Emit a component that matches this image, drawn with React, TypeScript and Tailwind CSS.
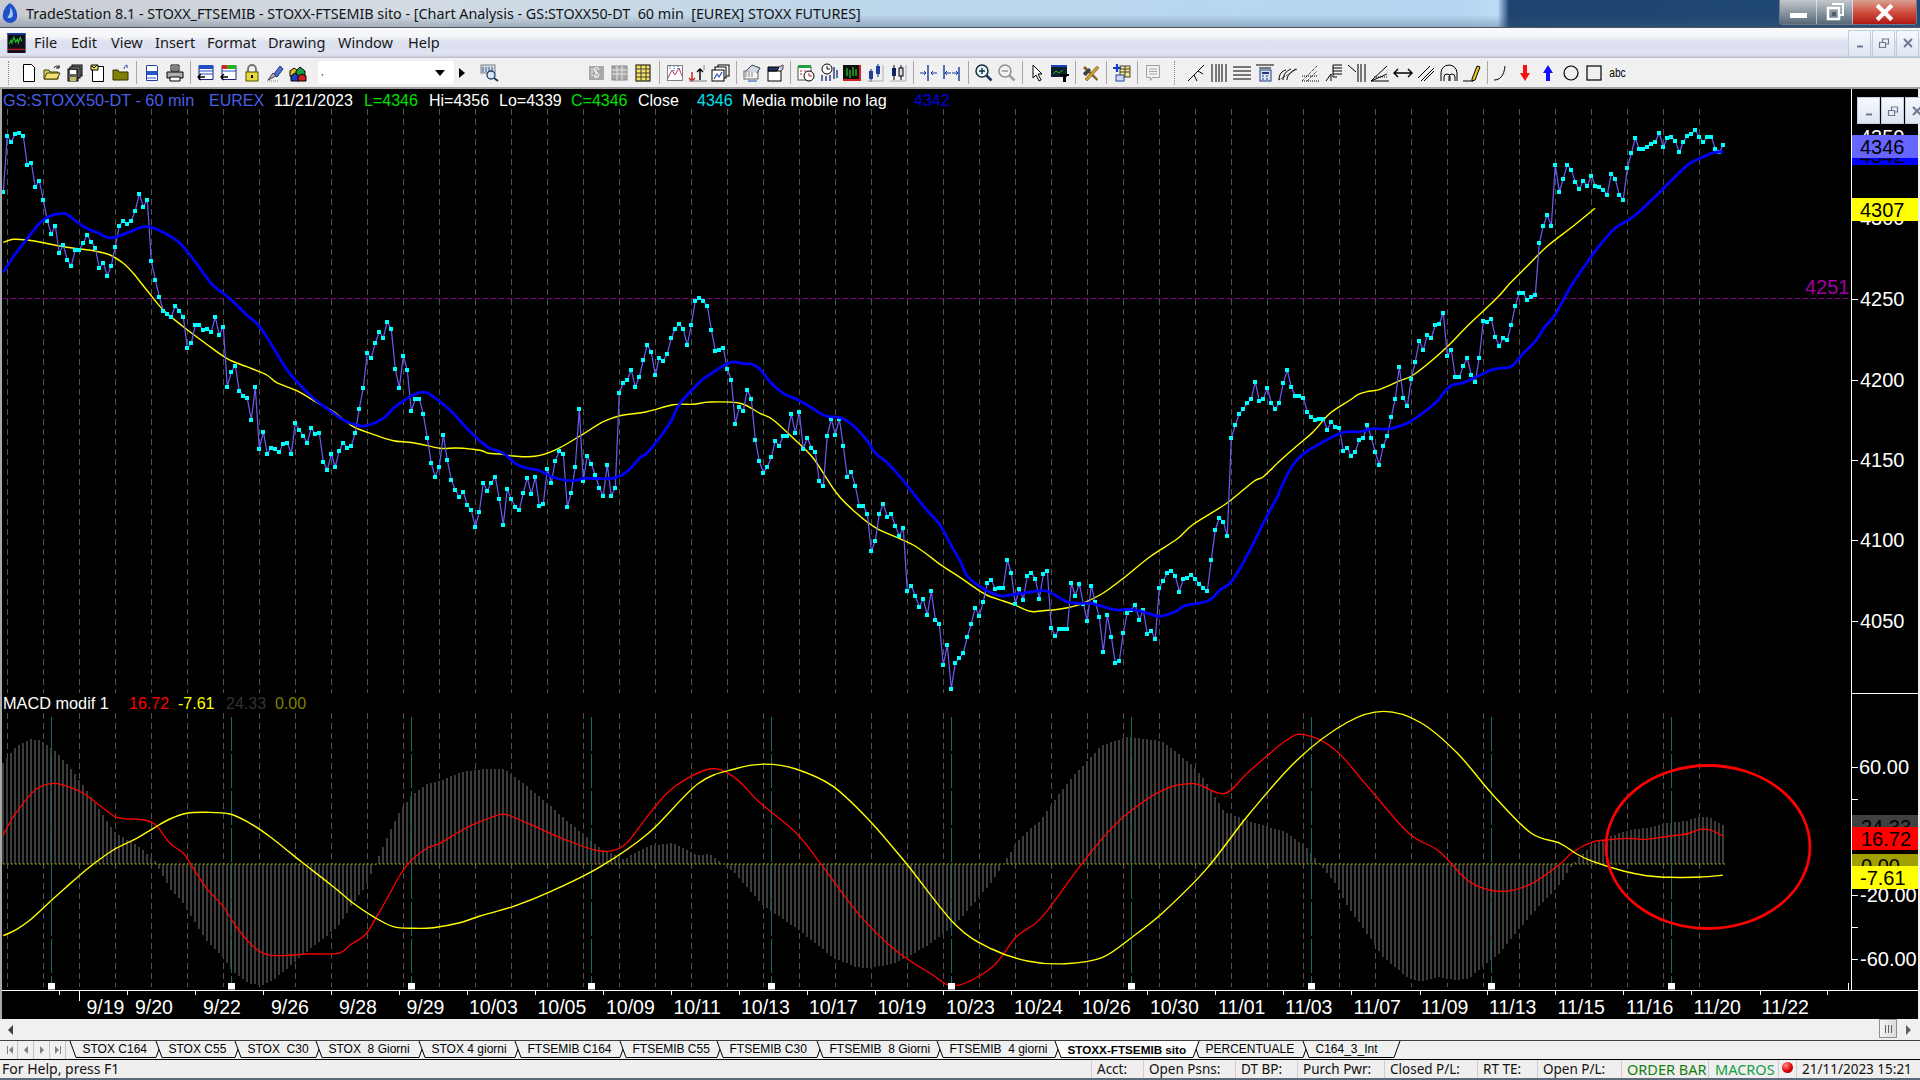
import React from "react";

const X = (i: number) => 3.3 + 4 * i;
type P = [number, number];
const z = (a: number[], xo: number, yo: number, sx = 3, sy = 3): P[] => {
  const r: P[] = [];
  for (let i = 0; i < a.length; i += 2) r.push([xo + a[i] / sx, yo + a[i + 1] / sy]);
  return r;
};
const D = 1.2245;
const disp = (a: number[]): P[] => z(a, 0, 0, 1 / D, 1 / D);
const poly = (p: P[]) => p.map((q) => q[0].toFixed(1) + "," + q[1].toFixed(1)).join(" ");
const smooth = (p: P[]) => {
  let d = `M${p[0][0].toFixed(1)} ${p[0][1].toFixed(1)}`;
  for (let i = 0; i < p.length - 1; i++) {
    const a = p[Math.max(0, i - 1)], b = p[i], c = p[i + 1], e = p[Math.min(p.length - 1, i + 2)];
    const c1x = b[0] + (c[0] - a[0]) / 6, c1y = b[1] + (c[1] - a[1]) / 6;
    const c2x = c[0] - (e[0] - b[0]) / 6, c2y = c[1] - (e[1] - b[1]) / 6;
    d += `C${c1x.toFixed(1)} ${c1y.toFixed(1)} ${c2x.toFixed(1)} ${c2y.toFixed(1)} ${c[0].toFixed(1)} ${c[1].toFixed(1)}`;
  }
  return d;
};
const interp = (p: P[], x: number) => {
  if (x <= p[0][0]) return p[0][1];
  for (let i = 1; i < p.length; i++) {
    if (x <= p[i][0]) {
      const t = (x - p[i - 1][0]) / (p[i][0] - p[i - 1][0]);
      return p[i - 1][1] + t * (p[i][1] - p[i - 1][1]);
    }
  }
  return p[p.length - 1][1];
};

const s1 = [276,107,126,101,98,108,195,188,261,242,299,362,402,377,459,435,480,497,450,450,429,404,426,443,505,488,528,497,440,377,362,372,362,332,281,321,299,483,539,590,632,642,651,618,632,651,744,729,675,675,690,686,696,651,705,680,860,816,797,873,887,895,960,862,1047,995,1061,1043,1047,1055,1031,1028,1061,970,990,1008,1028,984,1002,998,1085,1110,1062,1100,1052,1028,1043,1038,998,926,863,759,774,729,695,714,665,687,806,864,767,810,933,897,897,942,1014,1090,1130,1100,1004,1080,1140].map((v) => 100 + v / 3);
const s1b = [490,497,492,505,510,527,512];
const s2 = [608,632,608,591,656,734,627,657,680,690,639,593,642,591,677,672,567,608,543,513,521,681,638,560,387,602,527,551,585,623,647,554,647,623,339,309,299,270,321,290,241,195,217,285,233,242,221,173,147,131,147,195,135,62,53,63,78,149,212,210,203,267,299,431,381,393,329,356,479,543,578,561,531,483,497,467,467,401,459,395,507,473,503,516,603,618,467,416,464,416,497,591,575,618,677,677,702,813,783,702,671,711,702,738,768,744,933,917,947,981,957,1005,933,1019,1031,1154,1095,1226,1149,1134].map((v) => 280 + v / 3);
const s3 = [939,891,851,803,827,785,729,721,747,743,743,659,699,791,747,779,707,698,717,776,703,692,863,887,867,867,867,729,767,731,791,843,737,787,831,935,825,890,969,963,879,819,809,795,840,809,881,873,897,743,722,699,692,707,755,717,713,705,717,731,743,753,659,570,533,545,588,294,255,222,207,189,177,125,183,177,144,188,207,188,129,90,141,168,168,173,215,231,239,237,237,269,245,261,263,333,323,348,336,299,294,255,294,336,375,317,288,231,177,81,173,198,117,65,2,30].map((v) => 340 + v / 3);
const s4 = [555,564,525,521,488,617,600,681,681,648,625,675,695,623,512,516,507,560,588,564,569,524,467,429,429,451,440,435,279,228,194,228,44,125,87,44,60,96,117,92,107,77,107,110,120,134,71,87,134,150,54].map((v) => 150 + v / 3);
const s5 = [460,415,447,447,441,433,425,400,441,415,410,423,457,425,408,401,391,410,426,410,410,446,457,434].map((v) => v / 3);
const price = [...s1, ...s1b, ...s2, ...s3, ...s4, ...s5].map((y, i) => [X(i), y] as P);

const blue: P[] = [
  ...z([10,517,40,470,80,418,120,368,150,348,180,341,200,343,230,365,260,385,290,397,325,413,350,410,390,395,420,383,445,380,480,392,510,408,540,430,570,465,600,505,635,552,670,580,700,605,740,645,770,670,800,710,830,760,865,815,900,855,940,895,980,925,1030,960,1070,975,1100,977,1150,955,1180,925,1210,903,1250,880,1280,878,1320,905,1360,940,1400,985], 0, 100),
  ...z([0,483,30,505,70,520,110,553,140,564,180,572,215,590,260,601,290,601,310,595,370,596,410,592,445,572,480,533,500,520,545,465,575,420,600,370,660,305,680,290,730,257,760,246,790,251,815,252,840,268,870,305,910,340,950,358,990,380,1035,407,1080,413,1115,433,1160,480,1185,518,1220,547,1260,590,1300,640,1340,690,1380,735,1410,790], 480, 280),
  ...z([0,662,20,705,60,740,120,767,170,762,210,756,260,753,320,785,360,790,395,790,440,803,470,810,510,808,555,817,600,829,650,813,675,797,745,782,780,750,810,730,840,685,875,620,920,530,955,465,995,380], 960, 340).filter((p) => p[0] < 1280),
  ...z([0,1020,35,950,70,912,130,875,190,847,240,845,280,836,330,836,390,815,465,760,490,730,515,706,550,698,590,680,640,658,680,653,700,645,730,610,765,575,795,530,825,495,875,405,930,325,960,285,1005,235,1060,200,1120,145,1190,75,1230,40,1260,25,1300,8,1330,5], 1280, 150),
];
const yel: P[] = [
  ...z([10,427,40,418,80,420,130,428,200,442,280,452,330,465,370,490,400,520,440,570,490,630,550,680,610,725,680,775,740,800,800,825,830,848,890,872,950,907,1000,935,1060,980,1120,1003,1180,1022,1240,1028,1320,1045,1370,1044], 0, 100),
  ...z([0,511,25,520,60,522,100,528,165,529,230,508,300,468,370,425,420,407,500,395,580,374,640,373,690,366,780,370,840,400,880,420,940,475,1000,535,1070,640,1130,700,1190,745,1300,795,1380,853], 480, 280),
  ...z([0,712,40,740,80,765,130,783,165,795,210,814,240,813,300,807,360,793,425,762,490,715,570,650,650,598,700,553,800,490,880,425,910,410], 960, 340),
  ...z([0,932,50,888,100,845,150,790,210,750,235,733,260,725,300,718,360,692,400,675,460,628,510,582,560,530,650,445,690,400,745,345,800,290,880,228,945,175], 1280, 150),
];
const red: P[] = [
  ...z([10,465,40,410,70,370,95,340,125,318,165,310,210,322,250,340,285,365,310,385,345,410,380,417,420,418,465,433,510,490,550,520,580,565,620,625,670,680,705,735,750,790,790,820,830,827,880,825,920,822,1015,820,1050,795,1095,765,1130,710,1170,640,1200,585,1235,540,1280,505,1320,490,1370,460,1400,443,1440,425], 0, 680),
  ...disp([400,668,412,665,430,672,460,685,490,695,510,690,530,665,550,643,580,628,600,635,620,655,650,680,670,705,700,745,730,775,760,795,780,805,810,790,830,765,850,750,880,710,900,685,920,665,950,645,975,640,1000,648,1020,630,1050,605,1065,600,1090,612,1115,640,1150,680,1175,695,1200,720,1225,728,1250,722]),
  ...z([0,372,40,335,100,305,140,300,200,295,260,298,330,288,380,282,420,268,450,270,488,288], 1560, 740),
];
const sig: P[] = [
  ...z([10,767,50,748,90,720,150,665,200,620,270,560,340,510,410,475,460,445,510,417,560,400,620,397,690,402,750,430,810,470,860,510,910,550,1000,620,1060,670,1120,710,1180,740,1240,745,1300,743,1380,728,1440,708], 0, 680),
  ...disp([420,740,450,728,490,708,530,680,570,640,600,628,625,624,650,628,680,642,710,670,740,705,780,755,810,775,840,785,870,787,900,782,925,765,950,745,985,710,1020,665,1060,620,1100,590,1130,581,1160,590,1190,615,1220,650,1250,680]),
  ...z([0,310,50,342,100,365,190,393,260,407,330,412,420,411,488,406], 1560, 740),
];

const squares = price.map((p) => `M${Math.round(p[0] - 2)} ${Math.round(p[1] - 2)}h4v4h-4z`).join("");
const hist = price.map((_, i) => {
  const x = Math.round(X(i)) - 1;
  const h = interp(sig, X(i)) - interp(red, X(i));
  return `M${x} 864h2V${(864 - h).toFixed(0)}h-2z`;
}).join("");
const grid = Array.from({ length: 48 }, (_, k) => Math.floor(7.3 + 36 * k) + 0.5);
const teal = Array.from({ length: 10 }, (_, k) => Math.floor(51.3 + 180 * k) + 0.5);
const xticks = [59.5,79.5,127.5,195.5,263.5,331.5,399.5,467.5,535.5,603.5,671.5,739.5,807.5,875.5,943.5,1011.5,1079.5,1147.5,1215.5,1283.5,1351.5,1420.5,1487.5,1555.5,1623.5,1691.5,1760.5,1827.5];
const dates: [string, number][] = [["9/19",86.5],["9/20",135],["9/22",203],["9/26",271],["9/28",339],["9/29",406.5],["10/03",469],["10/05",537.5],["10/09",606],["10/11",673.5],["10/13",741],["10/17",809],["10/19",877.5],["10/23",946],["10/24",1014],["10/26",1082],["10/30",1150],["11/01",1218],["11/03",1285],["11/07",1353.5],["11/09",1421],["11/13",1489],["11/15",1557.5],["11/16",1626],["11/20",1693.5],["11/22",1761.6]];
const prices: [string, number][] = [["4350",137],["4300",218],["4250",299],["4200",380],["4150",460],["4100",540],["4050",621]];
const macdLab: [string, number][] = [["60.00",767],["-20.00",895],["-60.00",959]];

const Ic = ({ children }: { children: React.ReactNode }) => (
  <svg viewBox="0 0 20 20" className="w-5 h-5">{children}</svg>
);
const Slot = ({ children }: { children: React.ReactNode }) => (
  <div className="w-[23px] h-full flex items-center justify-center shrink-0"><Ic>{children}</Ic></div>
);
const Sep = ({ w }: { w: string }) => (
  <div className={`${w} h-full flex items-center justify-center shrink-0`}><div className="w-px h-[23px] bg-[#a8a8a8]" /></div>
);

const Logo = () => (
  <svg viewBox="0 0 20 22" className="w-[19px] h-[20px]">
    <rect width="20" height="22" fill="#10101c" />
    <rect width="20" height="2" fill="#2038a0" />
    <path d="M2 12l2-4 1 3 2-6 2 5 2-3 1 4 2-6 2 4" fill="none" stroke="#20c020" strokeWidth="1.3" />
    <path d="M1 18h18" stroke="#e02020" strokeWidth="1.2" />
  </svg>
);

const Toolbar = () => (
  <div className="h-[31px] bg-[#f0f0f0] flex items-center border-b-2 border-[#a0a0a0] shrink-0 relative">
    <div className="w-[17px] h-full flex items-center justify-center shrink-0"><div className="w-0 h-[24px] border-l border-dotted border-[#888]" /></div>
    <Slot><path d="M4.500 1.500h8l3 3v14h-11z" fill="#fff" stroke="#000" /></Slot>
    <Slot><path d="M2 16V7h5l1 2h8v7z" fill="#d8c860" stroke="#404000" /><path d="M2 16l3-6h13l-3 6z" fill="#f0e070" stroke="#404000" /><path d="M12 5c2-3 4-2 5 0M17 2v3h-3" fill="none" stroke="#000" /></Slot>
    <Slot><rect x="7" y="2" width="10" height="11" fill="#808080" stroke="#000" /><rect x="5" y="4" width="10" height="11" fill="#a0a0a0" stroke="#000" /><rect x="3" y="6" width="10" height="12" fill="#606060" stroke="#000" /><rect x="5" y="7" width="6" height="4" fill="#fff" /><rect x="5" y="14" width="6" height="4" fill="#c0c060" /></Slot>
    <Slot><path d="M4.500 3.500h11v15h-11z" fill="#fff" stroke="#000" /><path d="M3 2h7v5H3z" fill="#f0e060" stroke="#000" /><path d="M4 3l2 2 3-3" fill="none" stroke="#000" /></Slot>
    <Slot><path d="M2 17V7h5l1 2h9v8z" fill="#808000" stroke="#303000" /><path d="M13 6c0-2 1-3 3-4M16 2v3" fill="none" stroke="#2040a0" /></Slot>
    <Sep w="w-[8px]" />
    <Slot><path d="M4.500 2.500h10l1 1v14h-11z" fill="#fff" stroke="#2040a0" /><rect x="5" y="8" width="10" height="4" fill="#2858c8" /><path d="M5 15h9" stroke="#2858c8" /></Slot>
    <Slot><path d="M6 2h8v6H6z" fill="#fff" stroke="#000" /><path d="M2 9h16v6H2z" fill="#b0b0b0" stroke="#000" /><path d="M5 14h10v4H5z" fill="#fff" stroke="#000" /><path d="M7 4h6M7 6h6" stroke="#000" /></Slot>
    <Sep w="w-[8px]" />
    <Slot><path d="M3 2.500h14v14H3z" fill="#fff" stroke="#202080" /><rect x="3" y="2" width="14" height="4" fill="#2050c0" /><path d="M3 8h14M3 11h14" stroke="#2050c0" /><path d="M9 14H2m3-3l-3 3 3 3" fill="none" stroke="#000" strokeWidth="1.3" /></Slot>
    <Slot><path d="M3 2.500h14v14H3z" fill="#fff" stroke="#202080" /><rect x="3" y="2" width="5" height="4" fill="#e02020" /><rect x="8" y="2" width="9" height="4" fill="#20b020" /><path d="M3 8h14" stroke="#2050c0" /><path d="M9 14H2m3-3l-3 3 3 3" fill="none" stroke="#000" strokeWidth="1.3" /></Slot>
    <Slot><path d="M6 9V6a4 4 0 018 0v3" fill="none" stroke="#707070" strokeWidth="1.8" /><rect x="4" y="9" width="12" height="9" fill="#e8d840" stroke="#505000" /><rect x="9" y="12" width="2" height="3" fill="#000" /></Slot>
    <Slot><path d="M3 17l5-7 3 3z" fill="#b0b0b0" stroke="#404040" /><path d="M9 11l6-8 3 3-6 8z" fill="#5070d0" stroke="#203080" /><path d="M2 18h11" stroke="#808080" strokeDasharray="1 1" /></Slot>
    <Slot><path d="M2 8l4-3 4 3v5l-4 3-4-3z" fill="#e0c020" stroke="#000" /><path d="M8 8l4-4 5 4v6l-5 3-4-3z" fill="#10a040" stroke="#000" /><path d="M3 13l4-3 4 3v5H3z" fill="#2040c0" stroke="#000" /><path d="M10 13l4-2 4 2v5h-8z" fill="#d02020" stroke="#000" /></Slot>
    <div className="w-[9px] shrink-0" />
    <div className="w-[136px] h-[23px] bg-white rounded-sm relative flex items-center shrink-0 pl-[3px]">
      <span className="text-[9px] leading-none text-black font-['Liberation_Sans',sans-serif]">,</span>
      <div className="ml-auto mr-[9px] w-0 h-0 border-l-[5px] border-r-[5px] border-t-[6px] border-l-transparent border-r-transparent border-t-black" />
    </div>
    <div className="w-[16px] h-full flex items-center justify-center shrink-0"><div className="w-0 h-0 border-t-[5px] border-b-[5px] border-l-[6px] border-t-transparent border-b-transparent border-l-black" /></div>
    <div className="w-[8.500px] shrink-0" />
    <Slot><rect x="1" y="2" width="14" height="8" fill="#d0d8e8" stroke="#808080" /><path d="M3 4v5M6 4v5M9 4v5M12 4v5" stroke="#406080" /><circle cx="11" cy="12" r="4" fill="#d0e8f8" stroke="#204060" strokeWidth="1.3" /><path d="M14 15l4 3" stroke="#204060" strokeWidth="2" /></Slot>
    <div className="w-[84px] shrink-0" />
    <Slot><rect x="2" y="3" width="15" height="14" fill="#a8a8a8" /><path d="M9 6v9M12 7a2 2 0 00-5 0c0 3 5 2 5 5a2 2 0 01-5 0" fill="none" stroke="#fff" /><path d="M4 6h2M4 9h2M4 12h2" stroke="#fff" /></Slot>
    <Slot><rect x="2" y="3" width="15" height="14" fill="#a8a8a8" stroke="#888" /><path d="M2 7h15M2 11h15M7 3v14M12 3v14" stroke="#e8e8e8" /></Slot>
    <Slot><rect x="3" y="2" width="14" height="16" fill="#f8e060" stroke="#000" /><path d="M3 6h14M3 10h14M3 14h14M8 2v16M13 2v16" stroke="#404040" /></Slot>
    <Sep w="w-[9px]" />
    <Slot><rect x="2.500" y="2.500" width="15" height="15" fill="#fff" stroke="#808080" /><path d="M3 15l4-8 3 5 4-7 3 8" fill="none" stroke="#b04060" /><path d="M5 3v4M9 3v6M13 3v4" stroke="#3050c0" strokeDasharray="1 1" /></Slot>
    <Slot><path d="M4 18V9m-3 6l3 3 3-3" fill="none" stroke="#c02020" strokeWidth="1.4" /><path d="M12 17V6m-3 3l3-3 3 3" fill="none" stroke="#000" strokeWidth="1.4" /><path d="M16 2v5M1 18h18" stroke="#808080" /></Slot>
    <Slot><rect x="7" y="2" width="11" height="11" fill="#fff" stroke="#000" /><rect x="4" y="4" width="11" height="11" fill="#fff" stroke="#000" /><rect x="1" y="7" width="12" height="11" fill="#fff" stroke="#000" /><path d="M3 16l3-5 2 3 3-5" fill="none" stroke="#2050b0" strokeWidth="1.2" /></Slot>
    <Sep w="w-[8px]" />
    <Slot><rect x="2" y="8" width="14" height="8" fill="#f4f4f4" stroke="#606060" /><path d="M4 9v5M7 9v5M10 9v5" stroke="#808080" /><path d="M4 8l6-6 8 3-3 5" fill="#d0d8e8" stroke="#404040" /><path d="M6 18h9" stroke="#2050b0" /></Slot>
    <Slot><rect x="3" y="8" width="13" height="10" fill="#fff" stroke="#000" /><path d="M3 4h11l-2 4H3z" fill="#203060" stroke="#000" /><path d="M14 4l4-2v4l-2 2" fill="#c0c8e0" stroke="#404040" /></Slot>
    <Sep w="w-[8px]" />
    <Slot><rect x="2" y="4" width="13" height="13" fill="#fff" stroke="#505050" /><rect x="2" y="2" width="13" height="3" fill="#20a040" /><circle cx="13" cy="13" r="5" fill="#fff" stroke="#000" /><path d="M13 10v3h3" fill="none" stroke="#c02020" /><path d="M4 8h2M8 8h2M4 11h2" stroke="#c02020" /></Slot>
    <Slot><circle cx="8" cy="6" r="5" fill="#fff" stroke="#000" /><path d="M8 3v3h3" fill="none" stroke="#000" /><path d="M3 12v6M7 13v5M11 12v6M15 4v12M18 7v8" stroke="#304080" strokeWidth="1.5" /></Slot>
    <Slot><rect x="1" y="2" width="18" height="16" fill="#101010" /><rect x="17" y="2" width="2" height="16" fill="#d02020" /><rect x="1" y="16" width="18" height="2" fill="#d02020" /><path d="M5 5v8M8 7v8M11 4v9M14 6v7" stroke="#20d020" strokeWidth="1.2" /></Slot>
    <Slot><path d="M6 6v13" stroke="#2040a0" strokeWidth="1.2" /><rect x="4" y="8" width="4" height="8" fill="#2040a0" /><path d="M13 1v13" stroke="#2040a0" strokeWidth="1.2" /><rect x="11" y="3" width="4" height="8" fill="#2040a0" /><path d="M2 18h16M18 2v16" stroke="#b0b0b0" /></Slot>
    <Slot><path d="M6 2v15" stroke="#000" /><rect x="4" y="5" width="4" height="8" fill="#102060" /><path d="M13 2v15" stroke="#000" /><rect x="11" y="5" width="4" height="8" fill="#d0d8f0" stroke="#000" /><path d="M2 18h16M18 2v16" stroke="#b0b0b0" /></Slot>
    <Sep w="w-[8px]" />
    <Slot><path d="M9 2v16" stroke="#1838a0" strokeWidth="1.4" /><path d="M1 10h6m-2-2l2 2-2 2M18 10h-6m2-2l-2 2 2 2" fill="none" stroke="#1838a0" /></Slot>
    <Slot><path d="M2 2v14M17 4v14" stroke="#1838a0" strokeWidth="1.4" /><path d="M3 10h6m-4-2l-2 2 2 2M16 10h-6m4-2l2 2-2 2" fill="none" stroke="#1838a0" /></Slot>
    <Sep w="w-[9px]" />
    <Slot><circle cx="8" cy="8" r="6" fill="#e8f4f8" stroke="#103040" strokeWidth="1.5" /><path d="M5 8h6M8 5v6" stroke="#103040" strokeWidth="1.4" /><path d="M12.500 12.500l5 5" stroke="#203060" strokeWidth="2.500" /></Slot>
    <Slot><circle cx="8" cy="8" r="6" fill="#f0f0f0" stroke="#909090" strokeWidth="1.5" /><path d="M5 8h6" stroke="#909090" strokeWidth="1.4" /><path d="M12.500 12.500l5 5" stroke="#a0a0a0" strokeWidth="2.500" /></Slot>
    <Sep w="w-[7px]" />
    <Slot><path d="M6 2v13l3-3 3 6 2-1-3-6h4z" fill="#fff" stroke="#000" /></Slot>
    <Slot><rect x="1" y="2" width="16" height="12" fill="#102030" /><rect x="1" y="2" width="16" height="2" fill="#2040c0" /><path d="M3 11l3-3 3 2 4-3" fill="none" stroke="#20c020" /><path d="M10 11h9v2h-3v6h-3v-6h-3z" fill="#000" /></Slot>
    <Sep w="w-[8px]" />
    <Slot><path d="M4 3l13 13-1 2L2 5z" fill="#806020" /><path d="M2 10l6-5 2 2-5 6-2-1z" fill="#404040" /><path d="M16 3l-12 13 2 2L18 5z" fill="#d0a030" stroke="#404000" strokeWidth=".5" /></Slot>
    <Sep w="w-[8px]" />
    <Slot><rect x="8" y="3" width="10" height="11" fill="#f8e880" stroke="#404040" /><path d="M8 6h10M8 9h10M13 3v11" stroke="#404040" /><path d="M1 5h8M5 1v8" stroke="#1040c0" strokeWidth="2.200" /><rect x="4" y="12" width="8" height="6" fill="#d0d8f0" stroke="#2040a0" /></Slot>
    <Sep w="w-[8px]" />
    <Slot><path d="M3.500 2.500h13v12h-7l-2 3v-3h-4z" fill="#f0f0f0" stroke="#a0a0a0" /><path d="M6 6h8M6 8.500h8M6 11h8" stroke="#a8a8a8" /></Slot>
    <div className="w-[20px] h-full flex items-center justify-center shrink-0"><div className="w-0 h-[24px] border-l border-dotted border-[#888]" /></div>
    <Slot><path d="M2 18L18 2" stroke="#000" /><path d="M8 12l3 6M12 8l5 3" stroke="#000" /></Slot>
    <Slot><path d="M3 1v18M7 1v18M10 1v18M13 1v18M17 1v18" stroke="#000" /></Slot>
    <Slot><path d="M1 4h18M1 8h18M1 12h18M1 16h18" stroke="#000" strokeWidth="1.200" /></Slot>
    <Slot><path d="M1 2h18" stroke="#000" /><path d="M4 5h12" stroke="#000" /><rect x="5" y="7" width="11" height="11" fill="#d8e4f4" stroke="#203880" /><rect x="7" y="9" width="7" height="2" fill="#203880" /><path d="M7 13h2M11 13h2M7 16h2M11 16h2" stroke="#203880" /></Slot>
    <Slot><path d="M1 17c0-6 3-9 7-10M5 17c0-5 3-9 8-11M9 17c0-4 3-8 9-11" fill="none" stroke="#000" /><path d="M1 17l18-11" stroke="#000" strokeDasharray="1 1" /></Slot>
    <Slot><path d="M1 18h18M1 18L16 3M6 18L16 8M1 13h15" stroke="#000" strokeDasharray="1 1" fill="none" /></Slot>
    <Slot><path d="M2 18l5-7v7M9 2h9M9 5h9M9 8h9M9 11h9M9 14h4" stroke="#000" fill="none" /><path d="M9 2v12" stroke="#000" /></Slot>
    <Slot><path d="M1 2l8 7M11 1v18M14 1v18M18 1v18" stroke="#000" /></Slot>
    <Slot><path d="M1 18h18M1 18L17 3M1 18l16-7" fill="none" stroke="#000" /><path d="M4 14h14" stroke="#000" strokeDasharray="1 1" /></Slot>
    <Slot><path d="M1 10h18M5 6l-4 4 4 4M15 6l4 4-4 4" fill="none" stroke="#000" strokeWidth="1.400" /></Slot>
    <Slot><path d="M2 15L14 3M5 18L18 5M8 18L18 8" stroke="#000" /></Slot>
    <Slot><path d="M2 18v-8a8 8 0 0116 0v8" fill="none" stroke="#000" /><path d="M5 18v-4a3 3 0 016 0v4M10 18v-4a3 3 0 016 0v4" fill="none" stroke="#000" /></Slot>
    <Slot><path d="M1 18h10" stroke="#000" /><path d="M10 16l5-13 3 1-5 13-3 1z" fill="#e8c820" stroke="#000" /></Slot>
    <Sep w="w-[7px]" />
    <Slot><path d="M2 17c6 0 10-4 11-14" fill="none" stroke="#000" /></Slot>
    <Slot><path d="M8 2h4v8h3l-5 8-5-8h3z" fill="#ff1010" /></Slot>
    <Slot><path d="M8 18h4v-8h3L10 2l-5 8h3z" fill="#1010ff" /></Slot>
    <Slot><circle cx="10" cy="10" r="7" fill="none" stroke="#000" strokeWidth="1.200" /></Slot>
    <Slot><rect x="3" y="3" width="14" height="14" fill="none" stroke="#000" strokeWidth="1.200" /></Slot>
    <div className="w-[23px] flex items-center justify-center shrink-0 text-[12px] text-black font-['Liberation_Sans',sans-serif] scale-x-[.85]">abc</div>
  </div>
);

const MdiBtn = ({ children, cls }: { children: React.ReactNode; cls: string }) => (
  <div className={`${cls} h-[27px] mr-px border border-[#bcd0e0] bg-[linear-gradient(to_bottom,#f6f8fc,#dfe6f2)] flex items-center justify-center`}>
    <svg viewBox="0 0 12 12" className="w-3 h-3">{children}</svg>
  </div>
);
const MdiIcons = () => (
  <>
    <MdiBtn cls="w-[23px]"><path d="M3 9.500h6" stroke="#6a7a90" strokeWidth="2" /></MdiBtn>
    <MdiBtn cls="w-[23px]"><path d="M1.500 5.500h6v5h-6zM4.500 5V2h6v5H8" fill="none" stroke="#6a7a90" strokeWidth="1.200" /></MdiBtn>
    <MdiBtn cls="w-[23px]"><path d="M2 2l8 8M10 2l-8 8" stroke="#6a7a90" strokeWidth="2" /></MdiBtn>
  </>
);

const tabs: [string, string][] = [
  ["STOX C164", "w-[86px]"], ["STOX C55", "w-[79px]"], ["STOX  C30", "w-[81px]"], ["STOX  8 Giorni", "w-[103px]"],
  ["STOX 4 giorni", "w-[96px]"], ["FTSEMIB C164", "w-[105px]"], ["FTSEMIB C55", "w-[97px]"], ["FTSEMIB C30", "w-[100px]"],
  ["FTSEMIB  8 Giorni", "w-[120px]"], ["FTSEMIB  4 giorni", "w-[118px]"], ["STOXX-FTSEMIB sito", "w-[138px]"],
  ["PERCENTUALE", "w-[110px]"], ["C164_3_Int", "w-[91px]"],
];
const tabW = [86, 79, 81, 103, 96, 105, 97, 100, 120, 118, 138, 110, 91];

const NavBtn = ({ d }: { d: string }) => (
  <div className="w-4 h-full border-r border-[#c4c4c4] flex items-center justify-center">
    <svg viewBox="0 0 10 10" className="w-2.5 h-2.5"><path d={d} fill="#808080" /></svg>
  </div>
);

const cells: [string, string, string][] = [
  ["Acct:", "w-[52px] pl-[5px]", "text-[#111]"], ["Open Psns:", "w-[92px] pl-[5px]", "text-[#111]"], ["DT BP:", "w-[62px] pl-[5px]", "text-[#111]"],
  ["Purch Pwr:", "w-[87px] pl-[5px]", "text-[#111]"], ["Closed P/L:", "w-[93px] pl-[5px]", "text-[#111]"], ["RT TE:", "w-[60px] pl-[5px]", "text-[#111]"],
  ["Open P/L:", "w-[84px] pl-[5px]", "text-[#111]"], ["ORDER BAR", "w-[87px] pl-[5px] text-[14.500px]", "text-[#108010]"], ["MACROS", "w-[70px] pl-[6px] text-[14.500px]", "text-[#10a040]"],
];

export default function App() {
  return (
    <div className="w-[1920px] h-[1080px] overflow-hidden flex flex-col bg-[#f0f0f0] font-['Noto_Sans',sans-serif]">
      {/* title bar */}
      <div className="h-[28px] shrink-0 flex items-start border-b border-[#4c5560] bg-[linear-gradient(to_bottom,rgba(255,255,255,0)_55%,rgba(70,90,115,0.35)_100%),linear-gradient(to_right,#c8ccd2_0%,#d4dbe2_20%,#bcd6ea_45%,#b4d6f2_76%,#bcdcf6_78%,#1d4470_78.6%,#224a78_100%)]">
        <svg viewBox="0 0 20 24" className="w-[18px] h-[22px] ml-[1px] mt-[2px] shrink-0">
          <path d="M10 1c5 3 8 9 8 14 0 5-4 8-8 8S2 20 2 15C2 10 5 4 10 1z" fill="#2050c8" />
          <path d="M10 5c2 3 4 6 3 10-1 3-4 3-6 2 2-2 4-6 3-12z" fill="#a8c8f0" />
        </svg>
        <div className="ml-[7px] text-[14.330px] leading-[28px] text-[#101418] whitespace-pre">TradeStation 8.1 - STOXX_FTSEMIB - STOXX-FTSEMIB sito - [Chart Analysis - GS:STOXX50-DT  60 min  [EUREX] STOXX FUTURES]</div>
        <div className="ml-auto mr-[3px] h-[25px] flex border border-[#6c7c8c] border-t-0 rounded-b-[4px] overflow-hidden">
          <div className="w-[37px] bg-[linear-gradient(to_bottom,#c4c8cc,#8c98a4_50%,#586878)] border-r border-white/50 flex items-end justify-center pb-[6px]"><div className="w-[17px] h-[5px] bg-white" /></div>
          <div className="w-[36px] bg-[linear-gradient(to_bottom,#c4c8cc,#8c98a4_50%,#586878)] border-r border-white/50 flex items-center justify-center">
            <svg viewBox="0 0 18 18" className="w-[18px] h-[18px]"><path d="M6 1h11v11h-3" fill="none" stroke="#fff" strokeWidth="2" /><rect x="2" y="5" width="11" height="11" fill="none" stroke="#fff" strokeWidth="2.500" /><rect x="6" y="9" width="4" height="4" fill="#506070" /></svg>
          </div>
          <div className="w-[63px] bg-[linear-gradient(to_bottom,#d8a090,#d05040_50%,#b01810)] flex items-center justify-center">
            <svg viewBox="0 0 20 20" className="w-[21px] h-[21px]"><path d="M3 3l14 14M17 3L3 17" stroke="#fff" strokeWidth="4" /></svg>
          </div>
        </div>
      </div>
      {/* menu */}
      <div className="h-[30px] shrink-0 flex items-center bg-[linear-gradient(to_bottom,#fafafc_0%,#f4f5fa_30%,#dee2f0_45%,#dee1ef_90%,#b8bcc4_100%)] text-[14.500px] text-[#181818]">
        <div className="w-[34px] pl-[7px] shrink-0"><Logo /></div>
        <div className="w-[37px] shrink-0">File</div>
        <div className="w-[40px] shrink-0">Edit</div>
        <div className="w-[44px] shrink-0">View</div>
        <div className="w-[52px] shrink-0">Insert</div>
        <div className="w-[61px] shrink-0">Format</div>
        <div className="w-[70px] shrink-0">Drawing</div>
        <div className="w-[70px] shrink-0">Window</div>
        <div className="shrink-0">Help</div>
        <div className="ml-auto flex self-center"><MdiIcons /></div>
      </div>
      <Toolbar />
      {/* chart */}
      <div className="h-[930px] shrink-0 flex relative">
        <div className="w-[2px] bg-[#a8a8a8] shrink-0" />
        <svg viewBox="2 89 1916 930" className="w-[1916px] h-[930px] bg-black shrink-0 block font-['Liberation_Sans',sans-serif]">
          <g stroke="#525252" strokeDasharray="6 4" shapeRendering="crispEdges">
            {grid.map((x) => <path key={x} d={`M${x} 109V693M${x} 713V987`} />)}
          </g>
          <path d="M3 298.500H1850" stroke="#8a008a" strokeDasharray="5 3" shapeRendering="crispEdges" />
          <path d={smooth(yel)} fill="none" stroke="#ffff00" strokeWidth="1.400" />
          <polyline points={poly(price)} fill="none" stroke="#6a5cf4" strokeWidth="1.2" />
          <path d={squares} fill="#00ffff" shapeRendering="crispEdges" />
          <path d={smooth(blue)} fill="none" stroke="#0000ff" strokeWidth="2.800" />

          <path d={hist} fill="#3c3c3c" shapeRendering="crispEdges" />
          <path d="M3 864H1725" stroke="#a8a800" strokeDasharray="2 2" strokeWidth="1.2" />
          <g stroke="#0f6c6c" strokeDasharray="34 3" shapeRendering="crispEdges">
            {teal.map((x) => <path key={x} d={`M${x} 717V984`} />)}
          </g>
          <path d={smooth(red)} fill="none" stroke="#ff0000" strokeWidth="1.300" />
          <path d={smooth(sig)} fill="none" stroke="#ffff00" strokeWidth="1.400" />
          <g fill="#fff">
            {teal.map((x) => <rect key={x} x={x - 3.5} y={983} width={7} height={6.500} />)}
          </g>
          <ellipse cx="1708" cy="847" rx="102" ry="81.500" fill="none" stroke="#ff0000" strokeWidth="2.800" />

          <g fontSize="16">
            <text y="106"><tspan x="3" fill="#4a5ee6" fontSize="16.300">GS:STOXX50-DT - 60 min</tspan><tspan x="209" fill="#4a5ee6">EUREX</tspan><tspan x="274" fill="#fff">11/21/2023</tspan><tspan x="364" fill="#00e000">L=4346</tspan><tspan x="429" fill="#fff">Hi=4356</tspan><tspan x="499" fill="#fff">Lo=4339</tspan><tspan x="571" fill="#00e000">C=4346</tspan><tspan x="638" fill="#fff">Close</tspan><tspan x="697" fill="#00e0f0">4346</tspan><tspan x="742" fill="#fff" fontSize="16.200">Media mobile no lag</tspan><tspan x="914" fill="#0000d8">4342</tspan></text>
            <text y="709"><tspan x="3" fill="#fff" fontSize="16.300">MACD modif 1</tspan><tspan x="129" fill="#ff0000">16.72</tspan><tspan x="178" fill="#ffff00">-7.61</tspan><tspan x="226" fill="#333333">24.33</tspan><tspan x="275" fill="#808000">0.00</tspan></text>
          </g>

          <path d="M1851.500 89V990M1852 693.500H1918M2 990.500H1918" stroke="#fff" />
          <g stroke="#fff" shapeRendering="crispEdges">
            {prices.map(([t, y]) => <path key={t} d={`M1852 ${y}.5h6`} />)}
            {[767,799,831,863,895,927,959].map((y) => <path key={y} d={`M1852 ${y}.5h6`} />)}
            {xticks.map((x, i) => <path key={x} d={`M${x} 990v${i === 1 ? 11 : 5}`} />)}
            <path d="M1848.500 983v7" />
          </g>
          <g fontSize="20" fill="#fff">
            {prices.map(([t, y]) => <text key={t} x="1860" y={y + 7}>{t}</text>)}
            {macdLab.map(([t, y]) => <text key={t} x={t[0] === "-" ? 1860 : 1859} y={y + 7}>{t}</text>)}
          </g>
          <text x="1805" y="294" fontSize="20" fill="#a000a0">4251</text>
          <g fontSize="19.500" fill="#fff">
            {dates.map(([t, x]) => <text key={t} x={x} y="1014">{t}</text>)}
          </g>
          <g fontSize="20" fill="#000">
            <rect x="1852" y="147" width="66" height="18" fill="#0000ff" />
            <text x="1860" y="163">4342</text>
            <rect x="1852" y="135" width="66" height="23" fill="#6666ff" />
            <text x="1860" y="154">4346</text>
            <rect x="1852" y="198" width="66" height="23" fill="#ffff00" />
            <text x="1860" y="217">4307</text>
            <rect x="1852" y="815" width="66" height="23" fill="#404040" />
            <text x="1861" y="834">24.33</text>
            <rect x="1852" y="827" width="66" height="23" fill="#ff0000" />
            <text x="1861" y="846">16.72</text>
            <rect x="1852" y="854" width="66" height="23" fill="#a0a000" />
            <text x="1861" y="873">0.00</text>
            <rect x="1852" y="866" width="66" height="23" fill="#ffff00" />
            <text x="1860" y="885">-7.61</text>
          </g>
        </svg>
        <div className="w-[2px] bg-[#f0f0f0] shrink-0" />
        <div className="absolute top-[8px] left-[1857px] flex w-[63px] overflow-hidden"><div className="flex shrink-0"><MdiIcons /></div></div>
      </div>
      {/* scrollbar */}
      <div className="h-[22px] shrink-0 flex items-center bg-[#f0f0f0] border-b border-[#404040]">
        <div className="w-0 h-0 ml-[8px] border-t-[5px] border-b-[5px] border-r-[5px] border-t-transparent border-b-transparent border-r-[#404040]" />
        <div className="ml-auto w-[18px] h-[19px] mb-[2px] bg-[linear-gradient(to_right,#f4f4f4,#dcdcdc)] border border-[#909090] flex items-center justify-center gap-[2px]">
          <div className="w-px h-[8px] bg-[#606060]" /><div className="w-px h-[8px] bg-[#606060]" /><div className="w-px h-[8px] bg-[#606060]" />
        </div>
        <div className="w-0 h-0 ml-[9px] mr-[9px] border-t-[5px] border-b-[5px] border-l-[5px] border-t-transparent border-b-transparent border-l-[#606060]" />
      </div>
      {/* tabs */}
      <div className="h-[18px] shrink-0 flex bg-[#f0f0f0] text-[12px] leading-[17px] text-black font-['Liberation_Sans',sans-serif]">
        <div className="w-[2px] shrink-0" />
        <NavBtn d="M2 1h1v8H2zM8 1v8L4 5z" />
        <NavBtn d="M7 1v8L3 5z" />
        <NavBtn d="M3 1v8l4-4z" />
        <NavBtn d="M8 1H7v8h1zM2 1v8l4-4z" />
        <div className="w-[3.500px] shrink-0" />
        {tabs.map(([t, w], i) => {
          const sel = i === 10;
          const tw = tabW[i];
          return (
            <div key={t} className={`${w} relative shrink-0 h-full whitespace-pre pl-[13px] ${sel ? "font-bold z-10 text-[11.700px]" : ""}`}>
              <svg viewBox={`0 0 ${tw + 8} 17`} className="absolute left-0 top-0 h-[17px] overflow-visible" width={tw + 8}>
                <path d={`M0 0L6 16.500H${tw}L${tw + 6} 0`} fill={sel ? "#fff" : "#f0f0f0"} stroke="#000" />
              </svg>
              <span className="relative">{t}</span>
            </div>
          );
        })}
      </div>
      {/* status */}
      <div className="flex-1 flex border-t border-black border-b-2 border-b-[#5a6a7a] bg-[#f0eeee] text-[13.500px] leading-[18px]">
        <div className="w-[1091px] pl-[2px] text-[#111] text-[14px]">For Help, press F1</div>
        {cells.map(([t, w, c]) => (
          <div key={t} className={`${w} ${c} border-l border-[#cfcdcd] whitespace-pre`}>{t}</div>
        ))}
        <div className="w-[18px] border-l border-[#cfcdcd] flex items-start pt-[2px] pl-[3px]">
          <div className="w-[11px] h-[11px] rounded-full bg-[radial-gradient(circle_at_35%_30%,#ff9090,#e00000_55%,#800000)]" />
        </div>
        <div className="flex-1 border-l border-[#cfcdcd] pl-[5px] text-[#111] whitespace-pre">21/11/2023 15:21</div>
      </div>
    </div>
  );
}
